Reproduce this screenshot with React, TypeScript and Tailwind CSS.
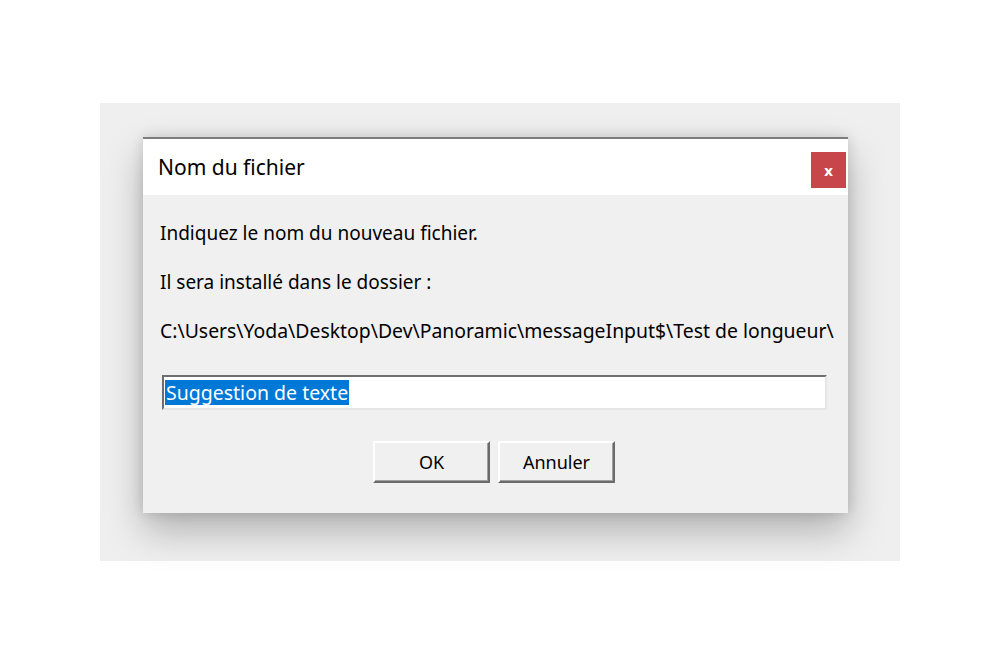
import React from 'react';

const font = { fontFamily: '"Noto Sans", "Open Sans", Arial, sans-serif' };

function Button({ label }: { label: string }) {
  return (
    <button className="h-[42px] w-[117px] border-2 border-t-white border-l-white border-r-[#6a6a6a] border-b-[#6a6a6a] bg-[#f0f0f0] text-[18px] text-black shadow-[inset_-1px_-1px_0_#a0a0a0]">
      {label}
    </button>
  );
}

export default function App() {
  return (
    <div className="min-h-screen w-full bg-white pt-[103px] pl-[100px]" style={font}>
      <div className="h-[458px] w-[800px] bg-[#efefef] pt-[34px] pl-[43px]">
        <div className="flex h-[376px] w-[705px] flex-col border-t-2 border-[#7c7c7c] bg-[#f0f0f0] shadow-[0_18px_36px_rgba(0,0,0,0.26),0_0_12px_rgba(0,0,0,0.14)]">
          {/* title bar */}
          <div className="flex h-[56px] items-start justify-between bg-white">
            <span className="pl-[15px] pt-[14px] text-[21px] leading-[28px] text-black">Nom du fichier</span>
            <div className="mr-[2px] mt-[13px] flex h-[36px] w-[35px] items-center justify-center bg-[#c7464a] text-[15px] font-bold leading-none text-white">
              x
            </div>
          </div>

          {/* body */}
          <div className="flex flex-col px-[17px] pt-[26px] text-[19px] leading-[24px] text-black">
            <p>Indiquez le nom du nouveau fichier.</p>
            <p className="mt-[25px]">Il sera installé dans le dossier :</p>
            <p className="mt-[25px] whitespace-nowrap text-[19.4px]">C:\Users\Yoda\Desktop\Dev\Panoramic\messageInput$\Test de longueur\</p>

            <div className="ml-[2px] mt-[32px] flex h-[35px] w-[665px] items-center border-2 border-t-[#6e6e6e] border-l-[#6e6e6e] border-r-[#e6e6e6] border-b-[#e6e6e6] bg-white pl-[1px]">
              <span className="bg-[#0078d7] px-[1px] text-[19.5px] leading-[25px] text-white">Suggestion de texte</span>
            </div>

            <div className="mt-[31px] flex justify-center gap-[8px] pr-[3px]">
              <Button label="OK" />
              <Button label="Annuler" />
            </div>
          </div>
        </div>
      </div>
    </div>
  );
}
